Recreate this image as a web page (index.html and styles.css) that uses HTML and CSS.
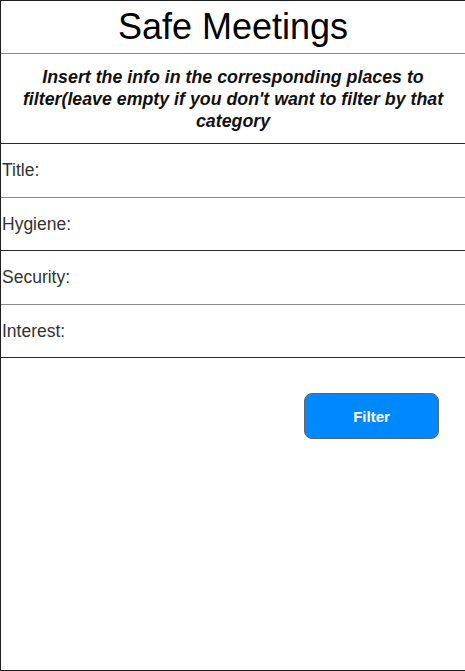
FILE: index.html
```html
<!DOCTYPE html>
<html>
<head>
<meta charset="utf-8">
<link rel="stylesheet" href="styles.css">
</head>
<body>
<div class="frame">
  <header class="header"><h1 class="title">Safe Meetings</h1></header>
  <section class="intro">
    <p class="intro-text">Insert the info in the corresponding places to filter(leave empty if you don't want to filter by that category</p>
  </section>
  <div class="field field-soft">Title:</div>
  <div class="field">Hygiene:</div>
  <div class="field field-soft">Security:</div>
  <div class="field">Interest:</div>
  <div class="actions"><button class="filter-btn">Filter</button></div>
</div>
</body>
</html>
```
FILE: styles.css
```css
html, body {
  margin: 0;
  padding: 0;
  background: #ffffff;
}
body {
  font-family: "Liberation Sans", Arial, sans-serif;
}
.frame {
  width: 465px;
  height: 671px;
  box-sizing: border-box;
  border: 1px solid #1e1e1e;
  border-right: none;
  display: flex;
  flex-direction: column;
}
.header {
  height: 52px;
  border-bottom: 1px solid #8a8a8a;
  display: flex;
  align-items: center;
  justify-content: center;
}
.title {
  margin: 0;
  font-weight: normal;
  font-size: 36px;
  color: #000;
  line-height: 1;
}
.intro {
  height: 89px;
  border-bottom: 1px solid #2a2a2a;
  display: flex;
  align-items: center;
  justify-content: center;
  padding: 0 10px;
}
.intro-text {
  margin: 0;
  text-align: center;
  font-weight: bold;
  font-style: italic;
  font-size: 17.8px;
  line-height: 22px;
  color: #111;
}
.field {
  height: 52px;
  border-bottom: 1px solid #2a2a2a;
  display: flex;
  align-items: center;
  padding-left: 1px;
  font-size: 17.5px;
  color: #333;
}
.field-soft {
  height: 53px;
  border-bottom-color: #8a8a8a;
}
.actions {
  display: flex;
  justify-content: flex-end;
  padding: 35px 26px 0 0;
}
.filter-btn {
  width: 135px;
  height: 46px;
  border: 1px solid #666;
  border-radius: 8px;
  background: #0088ff;
  color: #fff;
  font-family: "Liberation Sans", Arial, sans-serif;
  font-weight: bold;
  font-size: 15px;
}
```
